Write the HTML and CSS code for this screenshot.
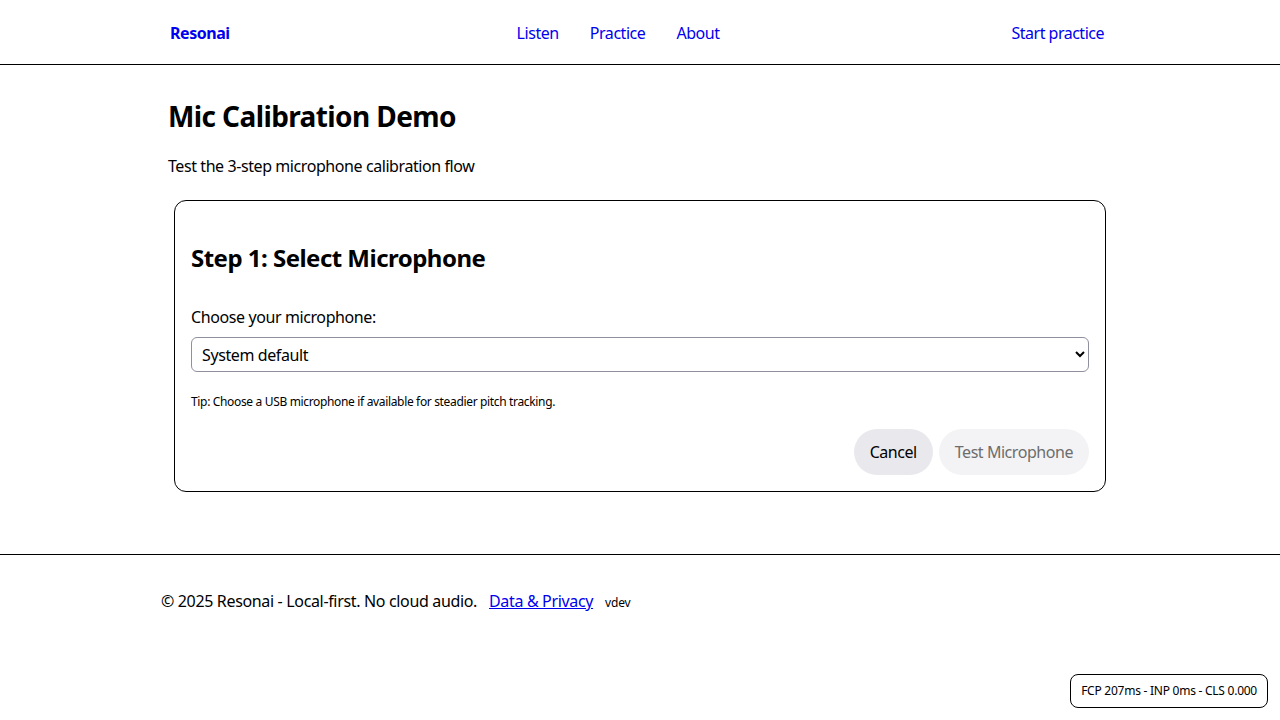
FILE: index.html
```html
<!DOCTYPE html>
<html lang="en">
<head>
<meta charset="utf-8">
<title>Mic Calibration Demo - Resonai</title>
<link rel="stylesheet" href="styles.css">
</head>
<body>
<header class="site-header">
  <div class="header-inner">
    <a class="brand" href="#">Resonai</a>
    <nav class="nav">
      <a href="#">Listen</a>
      <a href="#">Practice</a>
      <a href="#">About</a>
    </nav>
    <a class="cta" href="#">Start practice</a>
  </div>
</header>
<main class="main">
  <h1 class="title">Mic Calibration Demo</h1>
  <p class="lead">Test the 3-step microphone calibration flow</p>
  <section class="card">
    <h2 class="step-title">Step 1: Select Microphone</h2>
    <label class="field-label" for="mic">Choose your microphone:</label>
    <select id="mic" class="select">
      <option>System default</option>
    </select>
    <p class="tip">Tip: Choose a USB microphone if available for steadier pitch tracking.</p>
    <div class="actions">
      <button class="btn btn-cancel" type="button">Cancel</button>
      <button class="btn btn-primary" type="button" disabled>Test Microphone</button>
    </div>
  </section>
</main>
<footer class="site-footer">
  <div class="footer-inner">
    <span>© 2025 Resonai - Local-first. No cloud audio.</span>
    <a href="#" class="privacy">Data &amp; Privacy</a>
    <span class="version">vdev</span>
  </div>
</footer>
<div class="perf">FCP 207ms - INP 0ms - CLS 0.000</div>
</body>
</html>
```
FILE: styles.css
```css
* { box-sizing: border-box; }
html, body { margin: 0; padding: 0; }
body {
  font-family: "Noto Sans", "Open Sans", sans-serif;
  font-size: 16px;
  letter-spacing: -0.4px;
  color: #000;
  background: #fff;
}
a { color: #0000ee; text-decoration: none; }

.site-header { border-bottom: 1px solid #000; }
.header-inner {
  height: 64px;
  width: 960px;
  margin: 0 auto;
  padding: 2px 16px 0 10px;
  display: flex;
  align-items: center;
  justify-content: space-between;
}
.brand { font-weight: 700; letter-spacing: -0.45px; }
.nav { display: flex; gap: 31px; margin-right: 5px; letter-spacing: -0.45px; }
.cta { letter-spacing: -0.5px; }

.main {
  width: 960px;
  margin: 0 auto;
  padding: 0 8px 62px;
}
.title {
  font-size: 28px;
  line-height: 36px;
  font-weight: 700;
  letter-spacing: -0.6px;
  margin: 33px 0 0;
}
.lead {
  margin: 20px 0 0;
  line-height: 24px;
  letter-spacing: -0.42px;
}
.card {
  margin: 22px 6px 0;
  border: 1px solid #000;
  border-radius: 12px;
  padding: 26px 16px 16px;
}
.step-title {
  font-size: 24px;
  line-height: 30px;
  font-weight: 700;
  letter-spacing: -0.52px;
  margin: 16px 0 0;
}
.field-label {
  display: block;
  margin-top: 32px;
  line-height: 24px;
}
.select {
  display: block;
  width: 100%;
  height: 35px;
  margin-top: 8px;
  font: inherit;
  letter-spacing: -0.4px;
  padding: 0 6px;
  border: 1px solid #8f8f9d;
  border-radius: 6px;
  background: #fff;
  color: #000;
}
.tip {
  font-size: 12px;
  line-height: 18px;
  letter-spacing: -0.34px;
  margin: 21px 0 0;
}
.actions {
  display: flex;
  justify-content: flex-end;
  gap: 6px;
  margin-top: 18px;
}
.btn {
  font: inherit;
  letter-spacing: -0.45px;
  height: 46px;
  border: none;
  border-radius: 23px;
  padding: 0 16px;
}
.btn-cancel { background: #e9e9ed; color: #000; }
.btn-primary { background: #f3f3f5; color: #6d6d6d; }

.site-footer { border-top: 1px solid #000; }
.footer-inner {
  width: 960px;
  margin: 0 auto;
  padding: 34px 0 0 1px;
  display: flex;
  align-items: baseline;
  line-height: 24px;
  letter-spacing: -0.34px;
}
.privacy { margin-left: 12px; text-decoration: underline; }
.version { font-size: 12px; margin-left: 12px; letter-spacing: -0.2px; }

.perf {
  position: fixed;
  right: 12px;
  bottom: 12px;
  font-size: 12px;
  line-height: 18px;
  letter-spacing: -0.25px;
  padding: 7px 10px;
  border: 1px solid #000;
  border-radius: 8px;
  background: #fff;
}
```
